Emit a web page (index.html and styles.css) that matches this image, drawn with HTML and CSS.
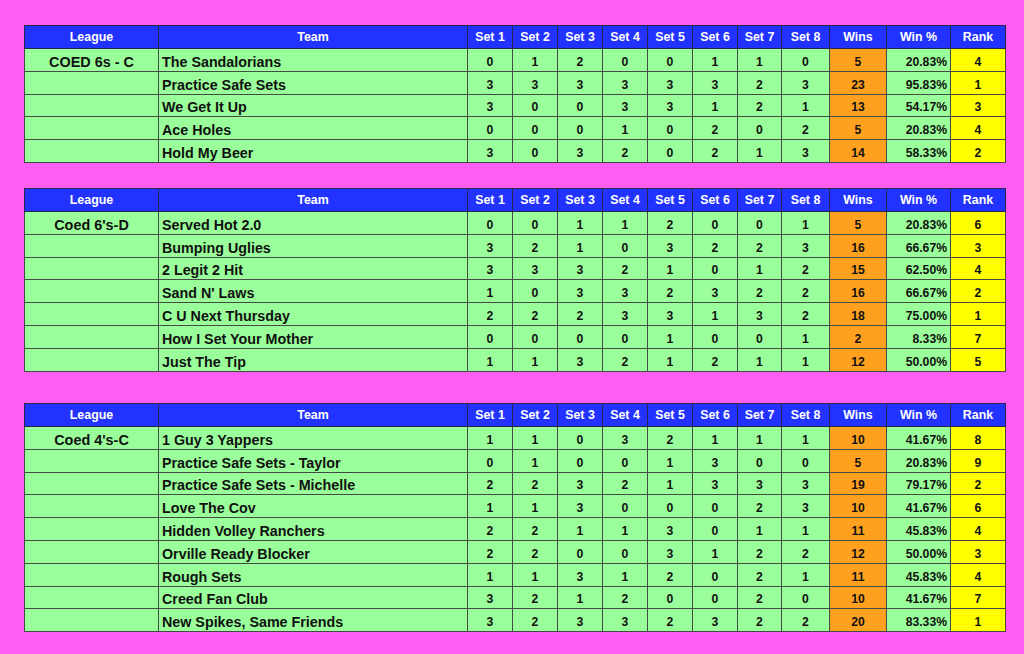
FILE: index.html
```html
<!DOCTYPE html>
<html>
<head>
<meta charset="utf-8">
<link rel="stylesheet" href="styles.css">
</head>
<body>
<div class="page">
<table class="standings first">
<colgroup><col class="c-league"><col class="c-team"><col class="c-s1"><col class="c-s2"><col class="c-s"><col class="c-s"><col class="c-s"><col class="c-s"><col class="c-s7"><col class="c-s8"><col class="c-wins"><col class="c-pct"><col class="c-rank"></colgroup>
<thead><tr><th>League</th><th>Team</th><th>Set 1</th><th>Set 2</th><th>Set 3</th><th>Set 4</th><th>Set 5</th><th>Set 6</th><th>Set 7</th><th>Set 8</th><th>Wins</th><th>Win %</th><th>Rank</th></tr></thead>
<tbody>
<tr><td class="league">COED 6s - C</td><td class="team">The Sandalorians</td><td>0</td><td>1</td><td>2</td><td>0</td><td>0</td><td>1</td><td>1</td><td>0</td><td class="wins">5</td><td class="pct">20.83%</td><td class="rank">4</td></tr>
<tr><td class="league"></td><td class="team">Practice Safe Sets</td><td>3</td><td>3</td><td>3</td><td>3</td><td>3</td><td>3</td><td>2</td><td>3</td><td class="wins">23</td><td class="pct">95.83%</td><td class="rank">1</td></tr>
<tr><td class="league"></td><td class="team">We Get It Up</td><td>3</td><td>0</td><td>0</td><td>3</td><td>3</td><td>1</td><td>2</td><td>1</td><td class="wins">13</td><td class="pct">54.17%</td><td class="rank">3</td></tr>
<tr><td class="league"></td><td class="team">Ace Holes</td><td>0</td><td>0</td><td>0</td><td>1</td><td>0</td><td>2</td><td>0</td><td>2</td><td class="wins">5</td><td class="pct">20.83%</td><td class="rank">4</td></tr>
<tr><td class="league"></td><td class="team">Hold My Beer</td><td>3</td><td>0</td><td>3</td><td>2</td><td>0</td><td>2</td><td>1</td><td>3</td><td class="wins">14</td><td class="pct">58.33%</td><td class="rank">2</td></tr>
</tbody>
</table>

<table class="standings second">
<colgroup><col class="c-league"><col class="c-team"><col class="c-s1"><col class="c-s2"><col class="c-s"><col class="c-s"><col class="c-s"><col class="c-s"><col class="c-s7"><col class="c-s8"><col class="c-wins"><col class="c-pct"><col class="c-rank"></colgroup>
<thead><tr><th>League</th><th>Team</th><th>Set 1</th><th>Set 2</th><th>Set 3</th><th>Set 4</th><th>Set 5</th><th>Set 6</th><th>Set 7</th><th>Set 8</th><th>Wins</th><th>Win %</th><th>Rank</th></tr></thead>
<tbody>
<tr><td class="league">Coed 6's-D</td><td class="team">Served Hot 2.0</td><td>0</td><td>0</td><td>1</td><td>1</td><td>2</td><td>0</td><td>0</td><td>1</td><td class="wins">5</td><td class="pct">20.83%</td><td class="rank">6</td></tr>
<tr><td class="league"></td><td class="team">Bumping Uglies</td><td>3</td><td>2</td><td>1</td><td>0</td><td>3</td><td>2</td><td>2</td><td>3</td><td class="wins">16</td><td class="pct">66.67%</td><td class="rank">3</td></tr>
<tr><td class="league"></td><td class="team">2 Legit 2 Hit</td><td>3</td><td>3</td><td>3</td><td>2</td><td>1</td><td>0</td><td>1</td><td>2</td><td class="wins">15</td><td class="pct">62.50%</td><td class="rank">4</td></tr>
<tr><td class="league"></td><td class="team">Sand N' Laws</td><td>1</td><td>0</td><td>3</td><td>3</td><td>2</td><td>3</td><td>2</td><td>2</td><td class="wins">16</td><td class="pct">66.67%</td><td class="rank">2</td></tr>
<tr><td class="league"></td><td class="team">C U Next Thursday</td><td>2</td><td>2</td><td>2</td><td>3</td><td>3</td><td>1</td><td>3</td><td>2</td><td class="wins">18</td><td class="pct">75.00%</td><td class="rank">1</td></tr>
<tr><td class="league"></td><td class="team">How I Set Your Mother</td><td>0</td><td>0</td><td>0</td><td>0</td><td>1</td><td>0</td><td>0</td><td>1</td><td class="wins">2</td><td class="pct">8.33%</td><td class="rank">7</td></tr>
<tr><td class="league"></td><td class="team">Just The Tip</td><td>1</td><td>1</td><td>3</td><td>2</td><td>1</td><td>2</td><td>1</td><td>1</td><td class="wins">12</td><td class="pct">50.00%</td><td class="rank">5</td></tr>
</tbody>
</table>

<table class="standings third">
<colgroup><col class="c-league"><col class="c-team"><col class="c-s1"><col class="c-s2"><col class="c-s"><col class="c-s"><col class="c-s"><col class="c-s"><col class="c-s7"><col class="c-s8"><col class="c-wins"><col class="c-pct"><col class="c-rank"></colgroup>
<thead><tr><th>League</th><th>Team</th><th>Set 1</th><th>Set 2</th><th>Set 3</th><th>Set 4</th><th>Set 5</th><th>Set 6</th><th>Set 7</th><th>Set 8</th><th>Wins</th><th>Win %</th><th>Rank</th></tr></thead>
<tbody>
<tr><td class="league">Coed 4's-C</td><td class="team">1 Guy 3 Yappers</td><td>1</td><td>1</td><td>0</td><td>3</td><td>2</td><td>1</td><td>1</td><td>1</td><td class="wins">10</td><td class="pct">41.67%</td><td class="rank">8</td></tr>
<tr><td class="league"></td><td class="team">Practice Safe Sets - Taylor</td><td>0</td><td>1</td><td>0</td><td>0</td><td>1</td><td>3</td><td>0</td><td>0</td><td class="wins">5</td><td class="pct">20.83%</td><td class="rank">9</td></tr>
<tr><td class="league"></td><td class="team">Practice Safe Sets - Michelle</td><td>2</td><td>2</td><td>3</td><td>2</td><td>1</td><td>3</td><td>3</td><td>3</td><td class="wins">19</td><td class="pct">79.17%</td><td class="rank">2</td></tr>
<tr><td class="league"></td><td class="team">Love The Cov</td><td>1</td><td>1</td><td>3</td><td>0</td><td>0</td><td>0</td><td>2</td><td>3</td><td class="wins">10</td><td class="pct">41.67%</td><td class="rank">6</td></tr>
<tr><td class="league"></td><td class="team">Hidden Volley Ranchers</td><td>2</td><td>2</td><td>1</td><td>1</td><td>3</td><td>0</td><td>1</td><td>1</td><td class="wins">11</td><td class="pct">45.83%</td><td class="rank">4</td></tr>
<tr><td class="league"></td><td class="team">Orville Ready Blocker</td><td>2</td><td>2</td><td>0</td><td>0</td><td>3</td><td>1</td><td>2</td><td>2</td><td class="wins">12</td><td class="pct">50.00%</td><td class="rank">3</td></tr>
<tr><td class="league"></td><td class="team">Rough Sets</td><td>1</td><td>1</td><td>3</td><td>1</td><td>2</td><td>0</td><td>2</td><td>1</td><td class="wins">11</td><td class="pct">45.83%</td><td class="rank">4</td></tr>
<tr><td class="league"></td><td class="team">Creed Fan Club</td><td>3</td><td>2</td><td>1</td><td>2</td><td>0</td><td>0</td><td>2</td><td>0</td><td class="wins">10</td><td class="pct">41.67%</td><td class="rank">7</td></tr>
<tr><td class="league"></td><td class="team">New Spikes, Same Friends</td><td>3</td><td>2</td><td>3</td><td>3</td><td>2</td><td>3</td><td>2</td><td>2</td><td class="wins">20</td><td class="pct">83.33%</td><td class="rank">1</td></tr>
</tbody>
</table>
</div>
</body>
</html>
```

FILE: styles.css
```css
html, body {
  margin: 0;
  padding: 0;
  background: #ff5ef2;
}

.page {
  width: 1024px;
  height: 654px;
  padding: 25px 0 0 24px;
  box-sizing: border-box;
  display: flex;
  flex-direction: column;
  align-items: flex-start;
  font-family: "Liberation Sans", Arial, sans-serif;
}

.standings {
  border-collapse: collapse;
  table-layout: fixed;
  width: 981px;
  border: 1px solid #3a3a3a;
}

.second { margin-top: 25px; }
.third { margin-top: 31.5px; }

.c-league { width: 134px; }
.c-team { width: 309px; }
.c-s1 { width: 45px; }
.c-s2 { width: 45px; }
.c-s { width: 45px; }
.c-s7 { width: 44px; }
.c-s8 { width: 48px; }
.c-wins { width: 57px; }
.c-pct { width: 64px; }
.c-rank { width: 55px; }

.standings th {
  background: #2233ff;
  color: #ffffff;
  font-weight: bold;
  font-size: 12.4px;
  height: 23px;
  padding: 0;
  text-align: center;
  vertical-align: middle;
  border: 1px solid #262650;
  box-sizing: border-box;
}

.standings td {
  background: #9aff9a;
  color: #111111;
  font-weight: bold;
  font-size: 12.2px;
  height: 22.8px;
  padding: 0 0 2px 0;
  text-align: center;
  vertical-align: bottom;
  line-height: 14px;
  border: 1px solid #444a44;
  box-sizing: border-box;
  white-space: nowrap;
}

.standings td.league {
  font-size: 14.4px;
  line-height: 16px;
  padding-bottom: 1px;
}

.standings td.team {
  font-size: 14.3px;
  line-height: 16px;
  text-align: left;
  padding-left: 3px;
  padding-bottom: 1px;
}

.standings td.wins {
  background: #ffa11f;
}

.standings td.pct {
  text-align: right;
  padding-right: 3px;
}

.standings td.rank {
  background: #ffff00;
}
```
